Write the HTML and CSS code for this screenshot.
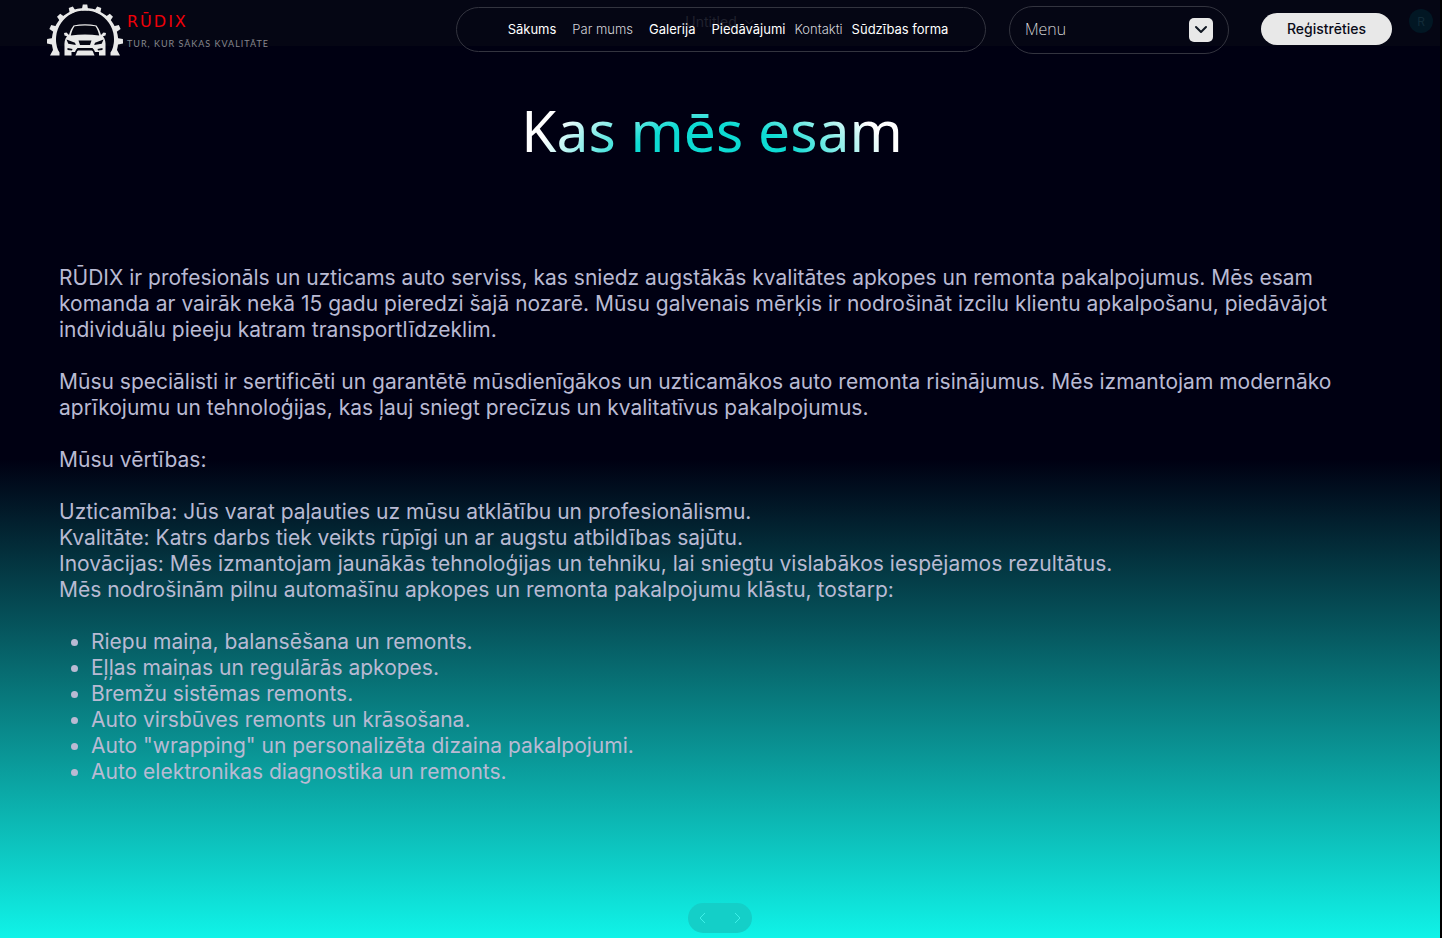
FILE: index.html
```html
<!DOCTYPE html>
<html lang="lv">
<head>
<meta charset="utf-8">
<meta name="viewport" content="width=device-width, initial-scale=1">
<title>RŪDIX – Par mums</title>
<link rel="stylesheet" href="styles.css">
</head>
<body>
<div class="page">
  <div class="toolbar">
    <span class="doc-title">Untitled
      <svg width="10" height="10" viewBox="0 0 10 10" fill="none" stroke="currentColor"><path d="M1 3l4 4 4-4"/></svg>
    </span>
    <span class="avatar">R</span>
  </div>
  <header class="header">
    <a class="brand" href="#">
      <svg class="brand-mark" viewBox="0 0 76 52" width="76" height="52" aria-hidden="true">
        <g fill="#e9e9e9">
          <g id="teeth">
            <path id="tooth" d="M34.7 6.500L35.8 .5h4.400L41.300 6.500z"/>
            <use href="#tooth" transform="rotate(22 38 38.500)"/>
            <use href="#tooth" transform="rotate(44 38 38.500)"/>
            <use href="#tooth" transform="rotate(66 38 38.500)"/>
            <use href="#tooth" transform="rotate(88 38 38.500)"/>
            <use href="#tooth" transform="rotate(-22 38 38.500)"/>
            <use href="#tooth" transform="rotate(-44 38 38.500)"/>
            <use href="#tooth" transform="rotate(-66 38 38.500)"/>
            <use href="#tooth" transform="rotate(-88 38 38.500)"/>
          </g>
          <path d="M3 51.500L6 46A33.200 33.200 0 1 1 70 46L73 51.500H63.500V48.500L65 46A29 29 0 1 0 11 46L12.500 48.500V51.500z"/>
          <path d="M22 31c1-4 2.800-7.200 4.500-9.500Q38 18.800 49.500 21.500c1.700 2.300 3.500 5.500 4.500 9.500l2.500-2.500 2.500.5-.5 2.500-2.500.8c2.300 3 2.800 6 2.500 10.500V51.500h-6.500V48H48l-2-3H30l-2 3h-3.500v3.500H17.500V42.800c-.3-4.500.2-7.500 2.500-10.500l-2.500-.8-.5-2.500 2.500-.5z"/>
          <path d="M30.500 46.500h15l2 5h-19z"/>
        </g>
        <g fill="#050612">
          <path d="M23.800 31.500c.8-3.800 2.200-7 3.800-9.200q10.400-1.800 20.800 0c1.600 2.200 3 5.400 3.800 9.200Q38 29.500 23.800 31.500z"/>
          <path d="M19.500 35.500l8.500 3.200.8 2.300-7.500-1.300zM56.500 35.500l-8.500 3.200-.8 2.300 7.500-1.300z"/>
          <path d="M31.500 36.500h13l-1.500 4.500H33zM20.500 44l5 1-.5 1.500-4.500-.5zM55.500 44l-5 1 .5 1.500 4.500-.5z"/>
          <path d="M30.500 44h15l2.500 3.500h-1.500L44.800 46H31.200l-1.700 1.500H28z"/>
        </g>
      </svg>
      <span class="brand-text">
        <span class="brand-name">RŪDIX</span>
        <span class="brand-tag">TUR, KUR SĀKAS KVALITĀTE</span>
      </span>
    </a>
    <nav class="nav">
      <a class="strong" href="#">Sākums</a>
      <a class="light" href="#">Par mums</a>
      <a class="strong" href="#">Galerija</a>
      <a class="strong tight" href="#">Piedāvājumi</a>
      <a class="light tight" href="#">Kontakti</a>
      <a class="strong" href="#">Sūdzības forma</a>
    </nav>
    <div class="menu">
      <select class="menu-select" aria-label="Menu"><option>Menu</option></select>
      <span class="menu-arrow">
        <svg width="14" height="10" viewBox="0 0 14 10" fill="none" stroke="#101722" stroke-width="2" stroke-linecap="round" stroke-linejoin="round"><path d="M2 2l5 5 5-5"/></svg>
      </span>
    </div>
    <button class="register" type="button">Reģistrēties</button>
  </header>
  <main class="main">
    <h1 class="title"><span class="title-text">Kas mēs esam</span></h1>
    <div class="copy">
      <p>RŪDIX ir profesionāls un uzticams auto serviss, kas sniedz augstākās kvalitātes apkopes un remonta pakalpojumus. Mēs esam komanda ar vairāk nekā 15 gadu pieredzi šajā nozarē. Mūsu galvenais mērķis ir nodrošināt izcilu klientu apkalpošanu, piedāvājot individuālu pieeju katram transportlīdzeklim.</p>
      <p>Mūsu speciālisti ir sertificēti un garantētē mūsdienīgākos un uzticamākos auto remonta risinājumus. Mēs izmantojam modernāko aprīkojumu un tehnoloģijas, kas ļauj sniegt precīzus un kvalitatīvus pakalpojumus.</p>
      <p>Mūsu vērtības:</p>
      <p>Uzticamība: Jūs varat paļauties uz mūsu atklātību un profesionālismu.<br>
      Kvalitāte: Katrs darbs tiek veikts rūpīgi un ar augstu atbildības sajūtu.<br>
      Inovācijas: Mēs izmantojam jaunākās tehnoloģijas un tehniku, lai sniegtu vislabākos iespējamos rezultātus.<br>
      Mēs nodrošinām pilnu automašīnu apkopes un remonta pakalpojumu klāstu, tostarp:</p>
      <ul>
        <li>Riepu maiņa, balansēšana un remonts.</li>
        <li>Eļļas maiņas un regulārās apkopes.</li>
        <li>Bremžu sistēmas remonts.</li>
        <li>Auto virsbūves remonts un krāsošana.</li>
        <li>Auto "wrapping" un personalizēta dizaina pakalpojumi.</li>
        <li>Auto elektronikas diagnostika un remonts.</li>
      </ul>
    </div>
  </main>
  <div class="pager">
    <button type="button" aria-label="Iepriekšējā"><svg width="8" height="12" viewBox="0 0 8 12" fill="none" stroke="currentColor"><path d="M6 1L1 6l5 5"/></svg></button>
    <button type="button" aria-label="Nākamā"><svg width="8" height="12" viewBox="0 0 8 12" fill="none" stroke="currentColor"><path d="M2 1l5 5-5 5"/></svg></button>
  </div>
</div>
</body>
</html>
```
FILE: styles.css
```css
* { box-sizing: border-box; }

body {
  margin: 0;
  background: #000;
  font-family: Inter, "Liberation Sans", sans-serif;
}

.page {
  position: relative;
  display: flex;
  flex-direction: column;
  min-height: 100vh;
  margin-right: 2px;
  background: linear-gradient(#000012 49%, #10f3e8 100%);
}

/* Faded editor bar behind the site header */
.toolbar {
  position: absolute;
  top: 0;
  left: 0;
  right: 0;
  display: flex;
  align-items: center;
  justify-content: flex-end;
  height: 46px;
  padding: 0 7px 4px 0;
  background: #050614;
  color: #20212e;
  font-size: 14px;
}

.doc-title {
  position: absolute;
  left: 50%;
  transform: translateX(-50%);
  white-space: nowrap;
}

.doc-title svg { margin-left: 4px; }

.avatar {
  display: grid;
  place-items: center;
  width: 24px;
  height: 24px;
  border-radius: 50%;
  background: #021724;
  color: #122b38;
  font-size: 12px;
}

.header {
  position: relative;
  display: flex;
  align-items: center;
  height: 60px;
  padding: 0 48px 0 47px;
}

.brand {
  display: flex;
  align-items: center;
  gap: 4px;
  margin-right: auto;
  color: inherit;
  text-decoration: none;
}

.brand-text {
  display: flex;
  flex-direction: column;
  gap: 7px;
  padding-top: 1px;
  font-family: "DejaVu Sans", sans-serif;
  white-space: nowrap;
}

.brand-name {
  color: #f00008;
  font-size: 16px;
  line-height: 20px;
  letter-spacing: 2px;
}

.brand-tag {
  color: #85868e;
  font-family: Lato, sans-serif;
  font-size: 9px;
  line-height: 10px;
  letter-spacing: 1px;
}

.nav {
  display: flex;
  align-items: center;
  justify-content: center;
  gap: 16px;
  width: 530px;
  height: 45px;
  margin-bottom: 1px;
  padding: 0 0 2px 14px;
  border: 1px solid #33343f;
  border-radius: 23px;
  font-size: 13px;
  white-space: nowrap;
}

.nav a { color: #fff; text-decoration: none; }
.nav .strong { font-weight: 400; }
.nav .light { color: #d4d4da; font-weight: 300; }
.nav .tight { margin-right: -7px; }

.menu {
  position: relative;
  width: 220px;
  height: 48px;
  margin: 0 32px 0 23px;
}

.menu-select {
  width: 100%;
  height: 100%;
  padding: 0 48px 2px 15px;
  appearance: none;
  border: 1px solid #33343f;
  border-radius: 24px;
  background: transparent;
  color: #f0f0f0;
  font: 200 16px "Noto Sans", sans-serif;
}

.menu-arrow {
  position: absolute;
  top: 12px;
  right: 16px;
  display: grid;
  place-items: center;
  width: 24px;
  height: 24px;
  border-radius: 5px;
  background: #e8e8e8;
  pointer-events: none;
}

.register {
  width: 131px;
  height: 32px;
  margin-bottom: 2px;
  padding: 0 0 1px;
  border: 0;
  border-radius: 16px;
  background: #e8e8e8;
  color: #0a0b18;
  font: 500 14px Inter, sans-serif;
}

.main { padding: 30px 59px 0; }

.title {
  margin: 0;
  padding-right: 16px;
  font: 400 57px/80px "Noto Sans", sans-serif;
  text-align: center;
}

.title-text {
  display: inline-block;
  background: radial-gradient(190px 80px at 50% 84%, #0ddbd3 42%, #fff 92%);
  background-clip: text;
  color: transparent;
}

.copy {
  padding-top: 95px;
  color: #b9bad3;
  font-size: 21px;
  line-height: 26px;
}

.copy p { margin: 0 0 26px; }

.copy ul { margin: 0; padding-left: 32px; }

.pager {
  display: flex;
  align-items: center;
  justify-content: space-between;
  width: 64px;
  height: 30px;
  margin: auto auto 5px;
  padding: 0 11px;
  border-radius: 15px;
  background: #14cfc8;
  color: #3df0e8;
}

.pager button {
  display: flex;
  padding: 0;
  border: 0;
  background: none;
  color: inherit;
}
```
